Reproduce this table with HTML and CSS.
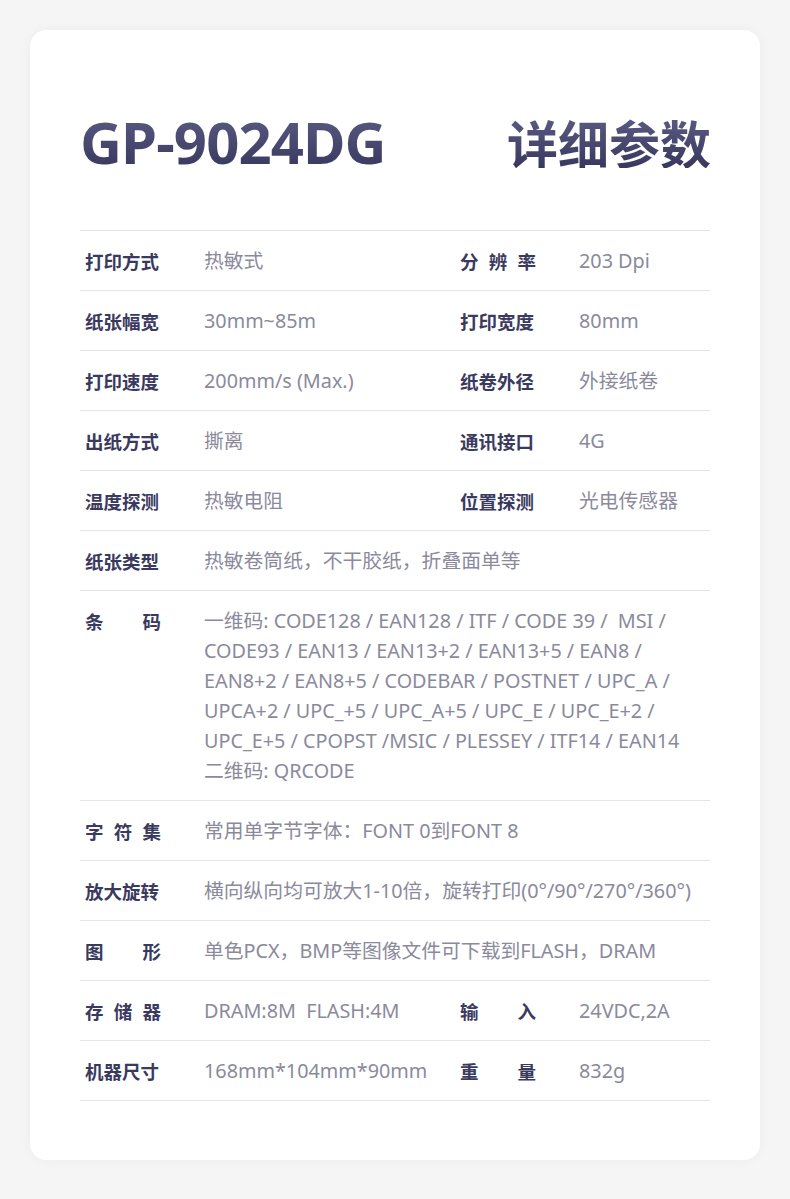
FILE: index.html
```html
<!DOCTYPE html>
<html lang="zh-CN">
<head>
<meta charset="utf-8">
<title>GP-9024DG 详细参数</title>
<link rel="stylesheet" href="styles.css">
</head>
<body>
<div class="card">
  <header class="head">
    <h1 class="model">GP-9024DG</h1>
    <h2 class="heading">详细参数</h2>
  </header>
  <div class="table">
    <div class="row">
      <div class="k">打印方式</div>
      <div class="v">热敏式</div>
      <div class="k j">分辨率</div>
      <div class="v">203 Dpi</div>
    </div>
    <div class="row">
      <div class="k">纸张幅宽</div>
      <div class="v">30mm~85m</div>
      <div class="k">打印宽度</div>
      <div class="v">80mm</div>
    </div>
    <div class="row">
      <div class="k">打印速度</div>
      <div class="v">200mm/s (Max.)</div>
      <div class="k">纸卷外径</div>
      <div class="v">外接纸卷</div>
    </div>
    <div class="row">
      <div class="k">出纸方式</div>
      <div class="v">撕离</div>
      <div class="k">通讯接口</div>
      <div class="v">4G</div>
    </div>
    <div class="row">
      <div class="k">温度探测</div>
      <div class="v">热敏电阻</div>
      <div class="k">位置探测</div>
      <div class="v">光电传感器</div>
    </div>
    <div class="row">
      <div class="k">纸张类型</div>
      <div class="v wide">热敏卷筒纸，不干胶纸，折叠面单等</div>
    </div>
    <div class="row">
      <div class="k j">条码</div>
      <div class="v wide">一维码: CODE128 / EAN128 / ITF / CODE 39 /&nbsp; MSI /<br>CODE93 / EAN13 / EAN13+2 / EAN13+5 / EAN8 /<br>EAN8+2 / EAN8+5 / CODEBAR / POSTNET / UPC_A /<br>UPCA+2 / UPC_+5 / UPC_A+5 / UPC_E / UPC_E+2 /<br>UPC_E+5 / CPOPST /MSIC / PLESSEY / ITF14 / EAN14<br>二维码: QRCODE</div>
    </div>
    <div class="row">
      <div class="k j">字符集</div>
      <div class="v wide">常用单字节字体：FONT 0到FONT 8</div>
    </div>
    <div class="row">
      <div class="k">放大旋转</div>
      <div class="v wide">横向纵向均可放大1-10倍，旋转打印(0°/90°/270°/360°)</div>
    </div>
    <div class="row">
      <div class="k j">图形</div>
      <div class="v wide">单色PCX，BMP等图像文件可下载到FLASH，DRAM</div>
    </div>
    <div class="row">
      <div class="k j">存储器</div>
      <div class="v">DRAM:8M&nbsp; FLASH:4M</div>
      <div class="k j">输入</div>
      <div class="v">24VDC,2A</div>
    </div>
    <div class="row">
      <div class="k">机器尺寸</div>
      <div class="v">168mm*104mm*90mm</div>
      <div class="k j">重量</div>
      <div class="v">832g</div>
    </div>
  </div>
</div>
</body>
</html>
```
FILE: styles.css
```css
html, body {
  margin: 0;
  padding: 0;
}
body {
  background: #f5f5f5;
  font-family: "Noto Sans CJK SC", "Noto Sans", sans-serif;
  padding: 30px;
  width: 730px;
}
.card {
  background: #ffffff;
  border-radius: 16px;
  box-shadow: 0 0 12px rgba(0, 0, 0, 0.04);
  padding: 0 50px 60px;
  height: 1130px;
  box-sizing: border-box;
}
.head {
  display: flex;
  justify-content: space-between;
  align-items: center;
  height: 200px;
  padding-top: 24px;
  box-sizing: border-box;
}
.model, .heading {
  margin: 0;
  background: linear-gradient(180deg, #5a5a82 0%, #38385f 100%);
  -webkit-background-clip: text;
  background-clip: text;
  color: transparent;
}
.model {
  font-family: "Noto Sans", "Open Sans", sans-serif;
  font-weight: 700;
  font-size: 58px;
  line-height: 1;
  letter-spacing: -0.9px;
}
.heading {
  font-family: "Noto Sans CJK SC", sans-serif;
  font-weight: 700;
  font-size: 51px;
  line-height: 1;
  margin-right: -1px;
}
.table {
  border-top: 1px solid #e4e4e8;
}
.row {
  display: grid;
  grid-template-columns: 119px 256px 119px 1fr;
  padding: 15px 0 14px 5px;
  border-bottom: 1px solid #e4e4e8;
  line-height: 30px;
  font-size: 19px;
}
.k {
  color: #3a3a5e;
  font-weight: 700;
  width: 76px;
  white-space: nowrap;
  font-size: 18.5px;
}
.k.j {
  text-align: justify;
  text-align-last: justify;
}
.v {
  color: #8a8a9c;
  white-space: nowrap;
  font-family: "Noto Sans", "Noto Sans CJK SC", sans-serif;
  font-size: 19.8px;
}
.v.wide {
  grid-column: 2 / 5;
}
```
